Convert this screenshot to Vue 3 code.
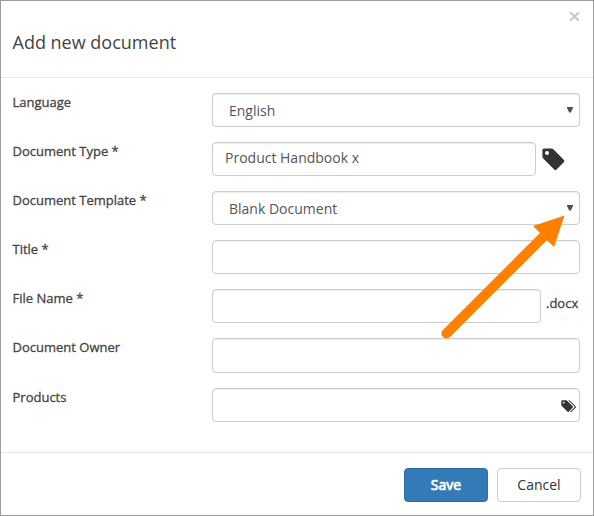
<script setup>
const fields = [
  { label: 'Language', kind: 'select', value: 'English' },
  { label: 'Document Type *', kind: 'type', value: 'Product Handbook x' },
  { label: 'Document Template *', kind: 'select', value: 'Blank Document' },
  { label: 'Title *', kind: 'text' },
  { label: 'File Name *', kind: 'file' },
  { label: 'Document Owner', kind: 'owner' },
  { label: 'Products', kind: 'products' },
]
</script>

<template>
  <div class="dialog">
    <header class="header">
      <h1 class="title">Add new document</h1>
      <button class="close" aria-label="Close">
        <svg width="11" height="11" viewBox="0 0 11 11"><path d="M1.2 1.2 9.8 9.8M9.8 1.2 1.2 9.8" /></svg>
      </button>
    </header>
    <main class="body">
      <div v-for="f in fields" :key="f.label" class="row" :class="f.kind">
        <div class="label">{{ f.label }}</div>
        <div class="field">
          <div class="control">
            <span v-if="f.value" class="value">{{ f.value }}</span>
            <svg v-if="f.kind === 'select'" class="caret" width="6" height="6" viewBox="0 0 6 6"><path d="M0 0H6V1L3.8 5.5H2.2L0 1Z" /></svg>
            <svg v-if="f.kind === 'products'" class="tags" width="16" height="13" viewBox="0 0 16 13">
              <path fill-rule="evenodd" d="M.3 1.1Q.3.3 1.1.3H5Q5.7.3 6.2.8L11.8 6.4Q12.2 7 11.8 7.5L7.7 11.8Q7.1 12.3 6.6 11.8L.9 6.1Q.3 5.6.3 4.9ZM2.7 1.7A.9.9 0 1 0 2.7 3.5A.9.9 0 0 0 2.7 1.7Z" />
              <path d="M7.2.3H8.5L14.7 6.4Q15.3 7 14.8 7.5L10.6 11.8Q10 12.3 9.2 11.8L13.4 7.4Q13.8 7 13.4 6.5Z" />
            </svg>
          </div>
          <svg v-if="f.kind === 'type'" class="tag" width="23" height="23" viewBox="0 0 23 23">
            <path fill-rule="evenodd" d="M.4 2Q.4.4 2 .4H9Q10.5.4 11.6 1.5L22 12.1Q22.9 13 22 13.9L14.3 21.7Q13.4 22.6 12.5 21.7L1.7 11Q.4 9.8.4 8.3ZM5 2.9A2 2 0 1 0 5 6.9A2 2 0 0 0 5 2.9Z" />
          </svg>
          <span v-if="f.kind === 'file'" class="suffix">.docx</span>
        </div>
      </div>
    </main>
    <footer class="footer">
      <button class="btn save">Save</button>
      <button class="btn">Cancel</button>
    </footer>
    <svg class="arrow" width="130" height="130" viewBox="0 0 130 130">
      <path class="shaft" d="M11.5 123.5 110 25" />
      <path class="head" d="M129.5 5.5 98 16 119 37Z" />
    </svg>
  </div>
</template>

<style>
body { background: #fff; }
</style>

<style scoped>
.dialog {
  position: relative;
  box-sizing: border-box;
  width: 594px;
  height: 516px;
  border: 1px solid #9c9c9c;
  background: #fff;
  font-family: "Open Sans", "Noto Sans", sans-serif;
  font-size: 14px;
  color: #444;
  display: flex;
  flex-direction: column;
}
.header {
  box-sizing: border-box;
  height: 77px;
  border-bottom: 1px solid #e5e5e5;
  display: flex;
  justify-content: space-between;
  padding: 10px 13px 0 11.5px;
}
.title { margin: 18px 0 0; font-size: 18px; font-weight: 400; line-height: 26px; }
.close { border: 0; padding: 0; background: none; width: 11px; height: 11px; display: flex; }
.close path { stroke: #c8c8c8; stroke-width: 2; }
.body { padding: 15px 13px 0 11.5px; height: 374px; box-sizing: border-box; }
.row { display: flex; height: 34px; margin-bottom: 15px; }
.row.owner { height: 35px; }
.label, .suffix { font-size: 13px; line-height: 18px; -webkit-text-stroke: 0.3px #444; }
.label { width: 199.5px; flex: none; }
.field { flex: 1; display: flex; }
.control {
  box-sizing: border-box;
  flex: 1;
  display: flex;
  justify-content: space-between;
  border: 1px solid #ccc;
  border-radius: 4px;
  box-shadow: inset 0 1px 1px rgba(0, 0, 0, 0.075);
  padding: 0 6px 0 16px;
  color: #555;
}
.value { line-height: 20px; margin-top: 7px; }
.type .value { margin-top: 5px; }
.type .control { flex: none; width: 324px; padding-left: 12px; }
.file .control { flex: none; width: 329px; }
.caret { margin-top: 13px; fill: #505050; }
.tag { margin: 6px 0 0 6px; fill: #333; }
.products .control { justify-content: flex-end; padding-right: 2px; }
.tags { margin-top: 11px; fill: #333; }
.suffix { margin: 5px 0 0 5px; }
.footer {
  flex: 1;
  border-top: 1px solid #e5e5e5;
  display: flex;
  justify-content: flex-end;
  gap: 9px;
  padding: 15px 12px 0 0;
}
.btn {
  box-sizing: border-box;
  width: 84px;
  height: 34px;
  border: 1px solid #ccc;
  border-radius: 4px;
  background: #fff;
  color: #333;
  font: 400 14px/20px "Open Sans", "Noto Sans", sans-serif;
  padding: 0;
}
.btn.save { background: #337ab7; border-color: #2e6da4; color: #fff; -webkit-text-stroke: 0.7px #fff; }
.arrow { position: absolute; left: 434px; top: 209px; }
.shaft { stroke: #ff8000; stroke-width: 10; stroke-linecap: round; }
.head { fill: #ff8000; }
</style>
